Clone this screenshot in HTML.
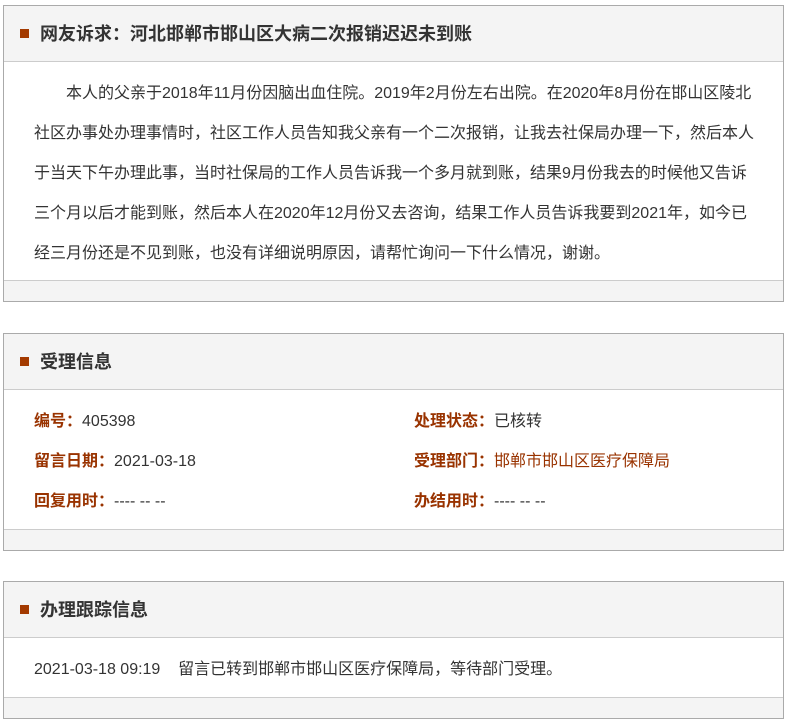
<!DOCTYPE html>
<html><head><meta charset="utf-8"><style>
body{margin:0;background:#fff;font-family:"Liberation Sans","Noto Sans CJK SC",sans-serif;color:#333;}
.box{position:absolute;left:3px;width:779px;border:1px solid #aaa;background:#fff;}
.hd{height:55px;background:#f4f4f4;border-bottom:1px solid #ccc;position:relative;}
.hd .sq{position:absolute;left:16px;top:23px;width:9px;height:9px;background:#a33a00;}
.hd h2{margin:0;position:absolute;left:36px;top:1px;line-height:55px;font-size:18px;font-weight:bold;color:#333;}
.ft{height:20px;background:#f4f4f4;border-top:1px solid #ccc;}
.p{font-size:16px;line-height:40px;padding:12px 0 0 30px;white-space:nowrap;}
.row{position:relative;height:40px;font-size:16px;line-height:40px;}
.l{position:absolute;left:30px;}
.r{position:absolute;left:410px;}
b{color:#993300;}
.red{color:#993300;}
</style></head><body>
<div class="box" style="top:5px;height:295px;">
<div class="hd"><div class="sq"></div><h2>网友诉求：河北邯郸市邯山区大病二次报销迟迟未到账</h2></div>
<div class="p" style="height:208px;">
<div style="text-indent:32px">本人的父亲于2018年11月份因脑出血住院。2019年2月份左右出院。在2020年8月份在邯山区陵北</div>
<div>社区办事处办理事情时，社区工作人员告知我父亲有一个二次报销，让我去社保局办理一下，然后本人</div>
<div>于当天下午办理此事，当时社保局的工作人员告诉我一个多月就到账，结果9月份我去的时候他又告诉</div>
<div>三个月以后才能到账，然后本人在2020年12月份又去咨询，结果工作人员告诉我要到2021年，如今已</div>
<div>经三月份还是不见到账，也没有详细说明原因，请帮忙询问一下什么情况，谢谢。</div>
</div>
<div class="ft" style="position:absolute;left:0;right:0;bottom:0;"></div>
</div>

<div class="box" style="top:333px;height:216px;">
<div class="hd"><div class="sq"></div><h2>受理信息</h2></div>
<div style="padding-top:12px;">
<div class="row"><span class="l"><b>编号：</b>405398</span><span class="r"><b>处理状态：</b>已核转</span></div>
<div class="row"><span class="l"><b>留言日期：</b>2021-03-18</span><span class="r"><b>受理部门：</b><span class="red">邯郸市邯山区医疗保障局</span></span></div>
<div class="row"><span class="l"><b>回复用时：</b>---- -- --</span><span class="r"><b>办结用时：</b>---- -- --</span></div>
</div>
<div class="ft" style="position:absolute;left:0;right:0;bottom:0;"></div>
</div>

<div class="box" style="top:581px;height:136px;">
<div class="hd"><div class="sq"></div><h2>办理跟踪信息</h2></div>
<div style="padding-top:12px;">
<div class="row"><span class="l">2021-03-18 09:19&nbsp;&nbsp;&nbsp;&nbsp;留言已转到邯郸市邯山区医疗保障局，等待部门受理。</span></div>
</div>
<div class="ft" style="position:absolute;left:0;right:0;bottom:0;"></div>
</div>
</body></html>
